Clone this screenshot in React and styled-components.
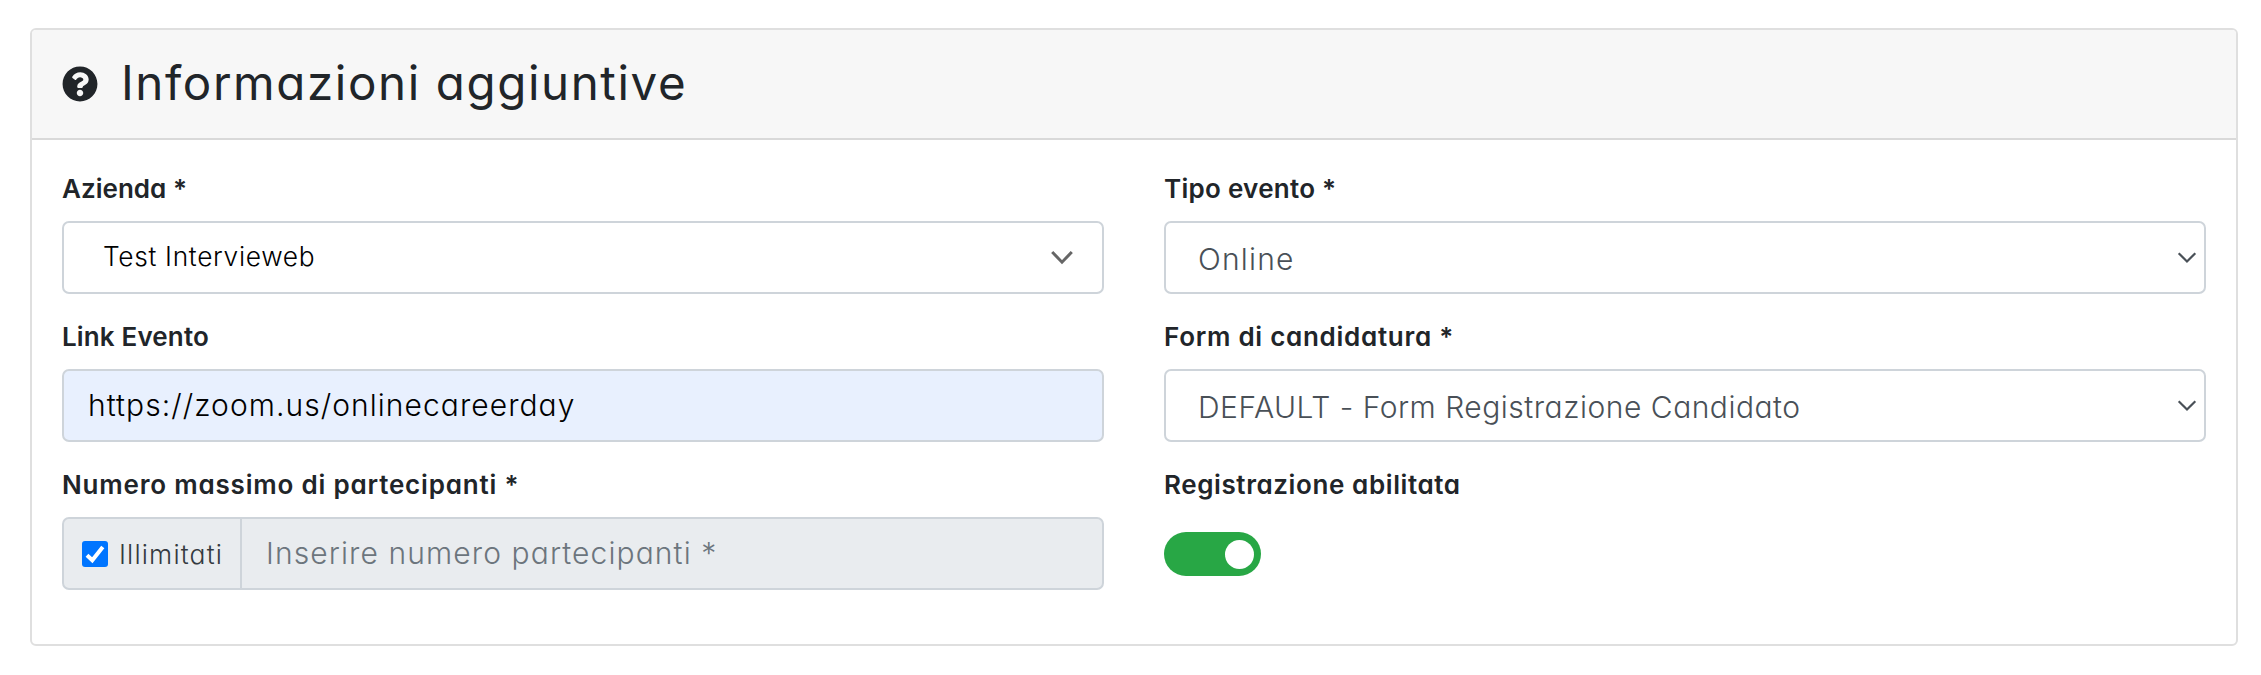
import React from 'react';
import styled, { createGlobalStyle } from 'styled-components';

const Global = createGlobalStyle`
  * { box-sizing: border-box; }
  body {
    margin: 0;
    background: #fff;
    color: #212529;
    font-family: Inter, "Open Sans", sans-serif;
    font-feature-settings: "cv11";
  }
`;

const Page = styled.main`
  padding: 28px 23px 29px 30px;
`;

const Card = styled.section`
  height: 618px;
  border: 2px solid #dfdfdf;
  border-radius: 6px;
  overflow: hidden;
`;

const CardHeader = styled.header`
  display: flex;
  align-items: center;
  height: 110px;
  padding: 0 30px;
  background: #f7f7f7;
  border-bottom: 2px solid #d9d9d9;
`;

const HelpIcon = styled.svg`
  display: block;
  width: 36px;
  height: 36px;
`;

const Title = styled.h1`
  margin: 0 0 3px 23px;
  font-size: 47.5px;
  font-weight: 380;
  line-height: 60px;
  letter-spacing: 1.6px;
  white-space: nowrap;
`;

const Grid = styled.div`
  display: grid;
  grid-template-columns: 1fr 1fr;
  gap: 24px 60px;
  padding: 30px;
`;

const Field = styled.div`
  display: flex;
  flex-direction: column;
  gap: 13px;
`;

const Label = styled.label`
  font-size: 26px;
  font-weight: 600;
  line-height: 38px;
  letter-spacing: ${(p) => p.$track}px;
  white-space: nowrap;
`;

const Control = styled.div`
  display: flex;
  align-items: center;
  height: 73px;
  border: 2px solid #ced4da;
  border-radius: 7px;
  background: ${(p) => p.$fill || '#fff'};
  overflow: hidden;
`;

const Combo = styled(Control)`
  justify-content: space-between;
  padding: 0 29px 0 39px;
`;

const Select = styled(Control)`
  justify-content: space-between;
  padding: 0 7px 0 32px;
`;

const Input = styled(Control)`
  padding-left: 24px;
`;

const Value = styled.span`
  font-size: ${(p) => p.$size || 30}px;
  font-weight: ${(p) => p.$weight || 300};
  line-height: 40px;
  color: ${(p) => p.$color || '#495057'};
  letter-spacing: ${(p) => p.$track}px;
  padding: ${(p) => p.$pad || 0};
  white-space: nowrap;
`;

const Addon = styled.label`
  display: flex;
  align-items: center;
  align-self: stretch;
  width: 178px;
  padding-left: 18px;
  gap: 11px;
  border-right: 2px solid #ced4da;
`;

const Check = styled.svg`
  flex: none;
  width: 26px;
  height: 26px;
`;

const Arrow = styled.svg`
  flex: none;
  display: block;
  fill: none;
`;

const Toggle = styled.div`
  display: flex;
  align-items: center;
  justify-content: flex-end;
  width: 97px;
  height: 44px;
  margin-top: 15px;
  padding: 0 7px;
  border-radius: 22px;
  background: #28a745;
`;

const Knob = styled.span`
  width: 29px;
  height: 29px;
  border-radius: 50%;
  background: #fff;
`;

const SelectArrow = () => (
  <Arrow width="20" height="14" viewBox="0 0 20 14" stroke="#495057" strokeWidth="2.2">
    <path d="M1.7 2.2 10 10.5 18.3 2.2" />
  </Arrow>
);

export default function App() {
  return (
    <>
      <Global />
      <Page>
        <Card>
          <CardHeader>
            <HelpIcon viewBox="0 0 512 512" fill="#212529">
              <path d="M504 256c0 136.997-111.043 248-248 248S8 392.997 8 256C8 119.083 119.043 8 256 8s248 111.083 248 248zM262.655 90c-54.497 0-89.255 22.957-116.549 63.758-3.536 5.286-2.353 12.415 2.715 16.258l34.699 26.31c5.205 3.947 12.621 3.008 16.665-2.122 17.864-22.658 30.113-35.797 57.303-35.797 20.429 0 45.698 13.148 45.698 32.958 0 14.976-12.363 22.667-32.534 33.976C247.128 238.528 216 254.941 216 296v4c0 6.627 5.373 12 12 12h56c6.627 0 12-5.373 12-12v-1.333c0-28.462 83.186-29.647 83.186-106.667 0-58.002-60.165-102-116.531-102zM256 338c-25.365 0-46 20.635-46 46 0 25.364 20.635 46 46 46s46-20.636 46-46c0-25.365-20.635-46-46-46z" />
            </HelpIcon>
            <Title>Informazioni aggiuntive</Title>
          </CardHeader>
          <Grid>
            <Field>
              <Label $track={0.03}>Azienda *</Label>
              <Combo>
                <Value $size={26.3} $color="#000" $track={0.68} $pad="0 0 2px">Test Intervieweb</Value>
                <Arrow width="22" height="16" viewBox="0 0 22 16" stroke="#666" strokeWidth="3">
                  <path d="M1.2 2 11 12.2 20.8 2" />
                </Arrow>
              </Combo>
            </Field>
            <Field>
              <Label $track={0.27}>Tipo evento *</Label>
              <Select>
                <Value $track={1.2} $pad="3px 0 0">Online</Value>
                <SelectArrow />
              </Select>
            </Field>
            <Field>
              <Label $track={0.15}>Link Evento</Label>
              <Input $fill="#e8f0fe">
                <Value $weight={350} $color="#000" $track={1.05} $pad="0 0 1px">https://zoom.us/onlinecareerday</Value>
              </Input>
            </Field>
            <Field>
              <Label $track={0.72}>Form di candidatura *</Label>
              <Select>
                <Value $track={0.51} $pad="3px 0 0">DEFAULT - Form Registrazione Candidato</Value>
                <SelectArrow />
              </Select>
            </Field>
            <Field>
              <Label $track={0.81}>Numero massimo di partecipanti *</Label>
              <Control $fill="#e9ecef">
                <Addon>
                  <Check viewBox="0 0 26 26">
                    <rect width="26" height="26" rx="3" fill="#0075ff" />
                    <path d="M5 14.2 10.3 19.2 20.8 6" fill="none" stroke="#fff" strokeWidth="4" />
                  </Check>
                  <Value $size={26.5} $color="#343a40" $track={1.15}>Illimitati</Value>
                </Addon>
                <Value $weight={350} $color="#6c757d" $track={1.1} $pad="0 0 1px 24px">Inserire numero partecipanti *</Value>
              </Control>
            </Field>
            <Field>
              <Label $track={0.6}>Registrazione abilitata</Label>
              <Toggle>
                <Knob />
              </Toggle>
            </Field>
          </Grid>
        </Card>
      </Page>
    </>
  );
}
